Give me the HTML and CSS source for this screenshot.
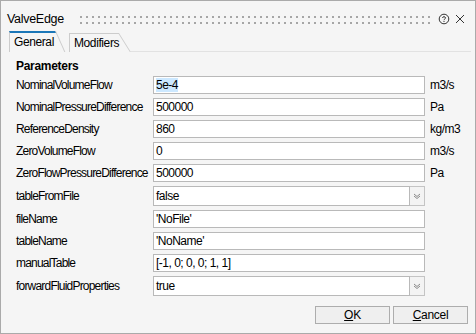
FILE: index.html
```html
<!DOCTYPE html>
<html lang="en">
<head>
    <meta charset="utf-8" />
    <title>ValveEdge</title>
    <link rel="stylesheet" href="styles.css">
</head>
<body>

    <div class="dialog">

        <!-- title bar -->
        <div class="titlebar">
            <span class="title">ValveEdge</span>
            <svg class="grip" width="352" height="8">
                <defs>
                    <pattern id="dots" width="6" height="6" patternUnits="userSpaceOnUse">
                        <rect x="0" y="0" width="2" height="2" fill="#a6a6a6" />
                    </pattern>
                </defs>
                <rect width="352" height="8" fill="url(#dots)" />
            </svg>
            <svg class="help" width="12" height="12" viewBox="0 0 12 12">
                <circle cx="6" cy="6" r="4.8" fill="none" stroke="#333" stroke-width="1" />
                <path d="M4.5 4.9 C4.5 3.3 7.5 3.3 7.5 4.9 C7.5 6 6 6 6 7.2" fill="none" stroke="#333" stroke-width="1" />
                <rect x="5.5" y="8" width="1" height="1" fill="#333" />
            </svg>
            <svg class="close" width="10" height="10" viewBox="0 0 10 10">
                <path d="M1 1 L9 9 M9 1 L1 9" stroke="#333" stroke-width="1" />
            </svg>
        </div>

        <!-- tabs -->
        <div class="tabs">
            <div class="tab active">General</div>
            <div class="tab">Modifiers</div>
            <div class="tab-fill"></div>
        </div>

        <!-- parameters -->
        <div class="panel">
            <div class="group-title">Parameters</div>
            <div class="params">
                <label>NominalVolumeFlow</label>
                <div class="field"><span class="selected">5e-4</span></div>
                <span class="unit">m3/s</span>

                <label>NominalPressureDifference</label>
                <div class="field">500000</div>
                <span class="unit">Pa</span>

                <label>ReferenceDensity</label>
                <div class="field">860</div>
                <span class="unit">kg/m3</span>

                <label>ZeroVolumeFlow</label>
                <div class="field">0</div>
                <span class="unit">m3/s</span>

                <label>ZeroFlowPressureDifference</label>
                <div class="field">500000</div>
                <span class="unit">Pa</span>

                <label>tableFromFile</label>
                <div class="combo"><span class="combo-text">false</span><span class="combo-btn"><svg width="8" height="6" viewBox="0 0 8 6"><path d="M1 1 L4 3.5 L7 1 M1 3 L4 5.5 L7 3" fill="none" stroke="#8a8a8a" stroke-width="1" /></svg></span></div>
                <span class="unit"></span>

                <label>fileName</label>
                <div class="field">'NoFile'</div>
                <span class="unit"></span>

                <label>tableName</label>
                <div class="field">'NoName'</div>
                <span class="unit"></span>

                <label>manualTable</label>
                <div class="field">[-1, 0; 0, 0; 1, 1]</div>
                <span class="unit"></span>

                <label>forwardFluidProperties</label>
                <div class="combo"><span class="combo-text">true</span><span class="combo-btn"><svg width="8" height="6" viewBox="0 0 8 6"><path d="M1 1 L4 3.5 L7 1 M1 3 L4 5.5 L7 3" fill="none" stroke="#8a8a8a" stroke-width="1" /></svg></span></div>
                <span class="unit"></span>
            </div>
        </div>

        <!-- buttons -->
        <div class="buttons">
            <button class="btn"><u>O</u>K</button>
            <button class="btn"><u>C</u>ancel</button>
        </div>

    </div>

</body>
</html>
```

FILE: styles.css
```css
body {
    margin: 0;
    padding: 0;
    background-color: #f5f5f5;
    font-family: "Liberation Sans", Arial, sans-serif;
    font-size: 12px;
    color: #000;
}

.dialog {
    width: 476px;
    height: 334px;
    box-sizing: border-box;
    border: 1px solid #aaaaaa;
    background-color: #f5f5f5;
    letter-spacing: -0.8px;
}

.titlebar {
    display: flex;
    align-items: center;
    height: 24px;
    padding: 6px 0 0 6px;
}

.title {
    font-size: 12.5px;
    letter-spacing: -0.3px;
    width: 59px;
}

.grip {
    margin-left: 14px;
    margin-top: 1px;
    display: block;
}

.help {
    margin-left: 6px;
    display: block;
}

.close {
    margin-left: 5px;
    display: block;
}

/* tabs */
.tabs {
    display: flex;
    align-items: flex-end;
    height: 21px;
    padding-left: 8px;
}

.tab {
    position: relative;
    box-sizing: border-box;
    width: 50px;
    height: 19px;
    line-height: 18px;
    padding-left: 4px;
    border-left: 1px solid #cccccc;
    border-top: 1px solid #cccccc;
    margin-right: 12px;
    letter-spacing: -0.4px;
}

.tab::after {
    content: "";
    position: absolute;
    top: -1px;
    right: 0;
    width: 0;
    height: 19px;
    border-right: 1px solid #cccccc;
    transform: skewX(32deg);
    transform-origin: top left;
}

.tab.active {
    width: 47px;
    height: 21px;
    border-top: 2px solid #1b77b8;
    margin-right: 13px;
    line-height: 19px;
}

.tab.active::after {
    top: -2px;
    height: 21px;
    transform: skewX(24deg);
}

.tab-fill {
    flex: 1;
    border-bottom: 1px solid #e2e2e2;
    margin-right: 4px;
}

/* parameters */
.panel {
    padding-left: 15px;
}

.group-title {
    font-weight: bold;
    height: 16px;
    line-height: 16px;
    margin-top: 6px;
    margin-bottom: 2px;
    letter-spacing: -0.3px;
}

.params {
    display: grid;
    grid-template-columns: 137px 272px auto;
    row-gap: 4px;
    align-items: center;
}

.params label {
    white-space: nowrap;
}

.field {
    height: 18px;
    box-sizing: border-box;
    border: 1px solid #b9b9b9;
    background-color: #fff;
    padding-left: 2px;
    line-height: 16px;
    white-space: nowrap;
    letter-spacing: -0.5px;
}

.selected {
    background-color: #cce8ff;
}

.unit {
    padding-left: 5px;
    letter-spacing: -0.5px;
}

.combo {
    display: flex;
    height: 20px;
    box-sizing: border-box;
    letter-spacing: -0.5px;
}

.combo-text {
    flex: 1;
    border: 1px solid #b9b9b9;
    background-color: #fff;
    padding-left: 2px;
    line-height: 18px;
}

.combo-btn {
    width: 14px;
    border: 1px solid #c4c4c4;
    border-left: none;
    background-color: #f3f3f3;
    display: flex;
    align-items: center;
    justify-content: center;
}

/* buttons */
.buttons {
    display: flex;
    justify-content: flex-end;
    gap: 3px;
    margin-top: 10px;
    padding-right: 7px;
}

.btn {
    width: 75px;
    height: 18px;
    box-sizing: border-box;
    border: 1px solid #adadad;
    background-color: #efefef;
    font-family: "Liberation Sans", Arial, sans-serif;
    font-size: 12px;
    letter-spacing: -0.3px;
    padding: 0;
    line-height: 16px;
    color: #000;
}
```
